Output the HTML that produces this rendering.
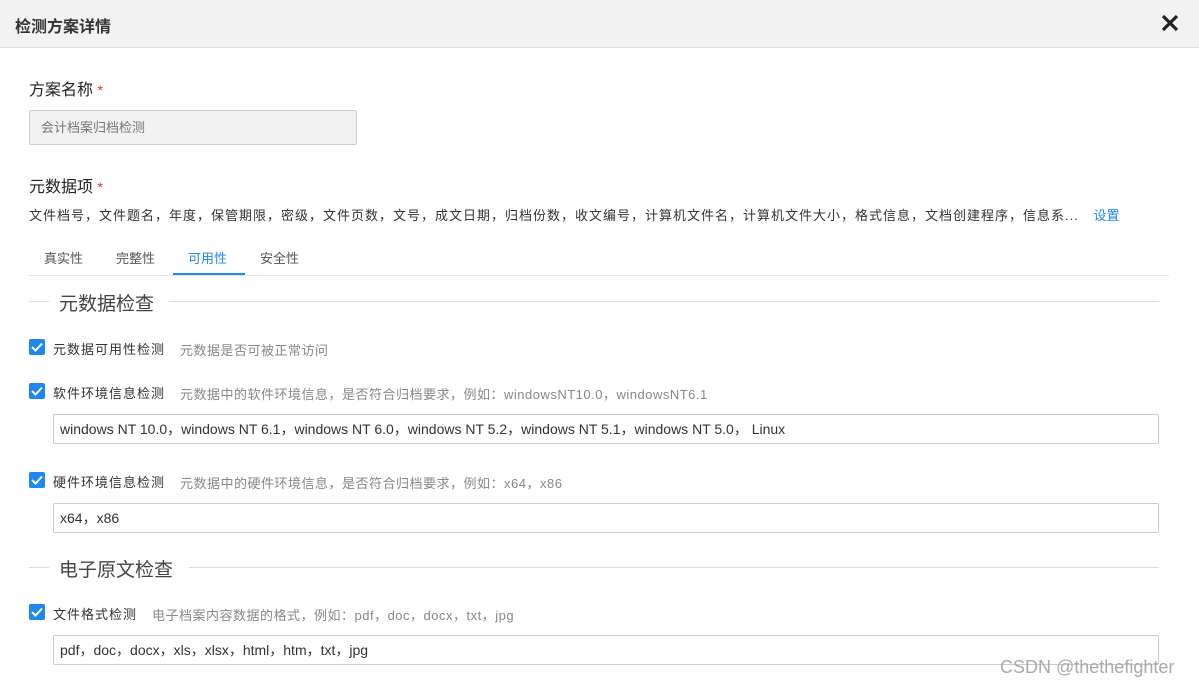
<!DOCTYPE html>
<html><head><meta charset="utf-8"><style>
*{margin:0;padding:0;box-sizing:border-box}
body{width:1199px;height:688px;overflow:hidden;background:#fff;font-family:"Liberation Sans","Noto Sans CJK SC",sans-serif;color:#333;position:relative}
.hd{position:absolute;left:0;top:0;width:1199px;height:48px;background:#f2f2f2;border-bottom:1px solid #ddd}
.hd .t{position:absolute;left:15px;top:13px;font-size:16px;font-weight:bold;color:#333}
.hd .x{position:absolute;left:1160px;top:12px}
.abs{position:absolute;white-space:nowrap}
.lbl{font-size:16px;color:#222}
.star{color:#d33;font-size:14px}
.inp{position:absolute;border:1px solid #ccc;border-radius:2px;font-size:14px;padding-left:6px;line-height:28px;color:#333}
.cb{position:absolute;width:16px;height:16px;background:#1e88f0;border-radius:2px}
.cb svg{position:absolute;left:2px;top:3px}
.ct{font-size:13px;color:#333;letter-spacing:1px}
.cd{font-size:13px;color:#888;letter-spacing:0.5px}
.sec{font-size:19px;color:#444}
.line{position:absolute;height:1px;background:#ddd}
</style></head><body>
<div class="hd"><div class="t">检测方案详情</div>
<svg class="x" width="20" height="22" viewBox="0 0 20 22"><path d="M3 4L17 18M17 4L3 18" stroke="#222" stroke-width="3.2"/></svg></div>
<div class="abs lbl" style="left:29px;top:76px">方案名称 <span class="star">*</span></div>
<div class="inp" style="left:29px;top:110px;width:328px;height:35px;background:#f2f2f2;color:#777;font-size:13px;line-height:33px;padding-left:11px">会计档案归档检测</div>
<div class="abs lbl" style="left:29px;top:173px">元数据项 <span class="star">*</span></div>
<div class="abs" style="left:29px;top:205px;font-size:13px;color:#333;letter-spacing:1px">文件档号，文件题名，年度，保管期限，密级，文件页数，文号，成文日期，归档份数，收文编号，计算机文件名，计算机文件大小，格式信息，文档创建程序，信息系... <span style="color:#1e88f0;margin-left:10px;letter-spacing:0">设置</span></div>
<div class="abs" style="left:44px;top:248px;font-size:13px;color:#555">真实性</div>
<div class="abs" style="left:116px;top:248px;font-size:13px;color:#555">完整性</div>
<div class="abs" style="left:188px;top:248px;font-size:13px;color:#1e88f0">可用性</div>
<div class="abs" style="left:260px;top:248px;font-size:13px;color:#555">安全性</div>
<div class="line" style="left:29px;top:275px;width:1140px;background:#e6e6e6"></div>
<div style="position:absolute;left:173px;top:273px;width:72px;height:2px;background:#1e88f0"></div>
<div class="line" style="left:29px;top:301px;width:20px"></div>
<div class="abs sec" style="left:59px;top:289px">元数据检查</div>
<div class="line" style="left:169px;top:301px;width:990px"></div>
<div class="cb" style="left:29px;top:339px"><svg width="12" height="10"><path d="M1 5L4.5 8.5L11 1.5" stroke="#fff" stroke-width="2" fill="none"/></svg></div>
<div class="abs ct" style="left:53px;top:339px">元数据可用性检测</div>
<div class="abs cd" style="left:180px;top:340px">元数据是否可被正常访问</div>
<div class="cb" style="left:29px;top:383px"><svg width="12" height="10"><path d="M1 5L4.5 8.5L11 1.5" stroke="#fff" stroke-width="2" fill="none"/></svg></div>
<div class="abs ct" style="left:53px;top:383px">软件环境信息检测</div>
<div class="abs cd" style="left:180px;top:384px">元数据中的软件环境信息，是否符合归档要求，例如：windowsNT10.0，windowsNT6.1</div>
<div class="inp" style="left:53px;top:414px;width:1106px;height:30px">windows NT 10.0，windows NT 6.1，windows NT 6.0，windows NT 5.2，windows NT 5.1，windows NT 5.0， Linux</div>
<div class="cb" style="left:29px;top:472px"><svg width="12" height="10"><path d="M1 5L4.5 8.5L11 1.5" stroke="#fff" stroke-width="2" fill="none"/></svg></div>
<div class="abs ct" style="left:53px;top:472px">硬件环境信息检测</div>
<div class="abs cd" style="left:180px;top:473px">元数据中的硬件环境信息，是否符合归档要求，例如：x64，x86</div>
<div class="inp" style="left:53px;top:503px;width:1106px;height:30px">x64，x86</div>
<div class="line" style="left:29px;top:567px;width:20px"></div>
<div class="abs sec" style="left:59px;top:555px">电子原文检查</div>
<div class="line" style="left:189px;top:567px;width:970px"></div>
<div class="cb" style="left:29px;top:604px"><svg width="12" height="10"><path d="M1 5L4.5 8.5L11 1.5" stroke="#fff" stroke-width="2" fill="none"/></svg></div>
<div class="abs ct" style="left:53px;top:604px">文件格式检测</div>
<div class="abs cd" style="left:152px;top:605px">电子档案内容数据的格式，例如：pdf，doc，docx，txt，jpg</div>
<div class="inp" style="left:53px;top:635px;width:1106px;height:30px">pdf，doc，docx，xls，xlsx，html，htm，txt，jpg</div>
<div class="abs" style="left:1000px;top:657px;font-size:18px;color:#aaa">CSDN @thethefighter</div>
</body></html>
